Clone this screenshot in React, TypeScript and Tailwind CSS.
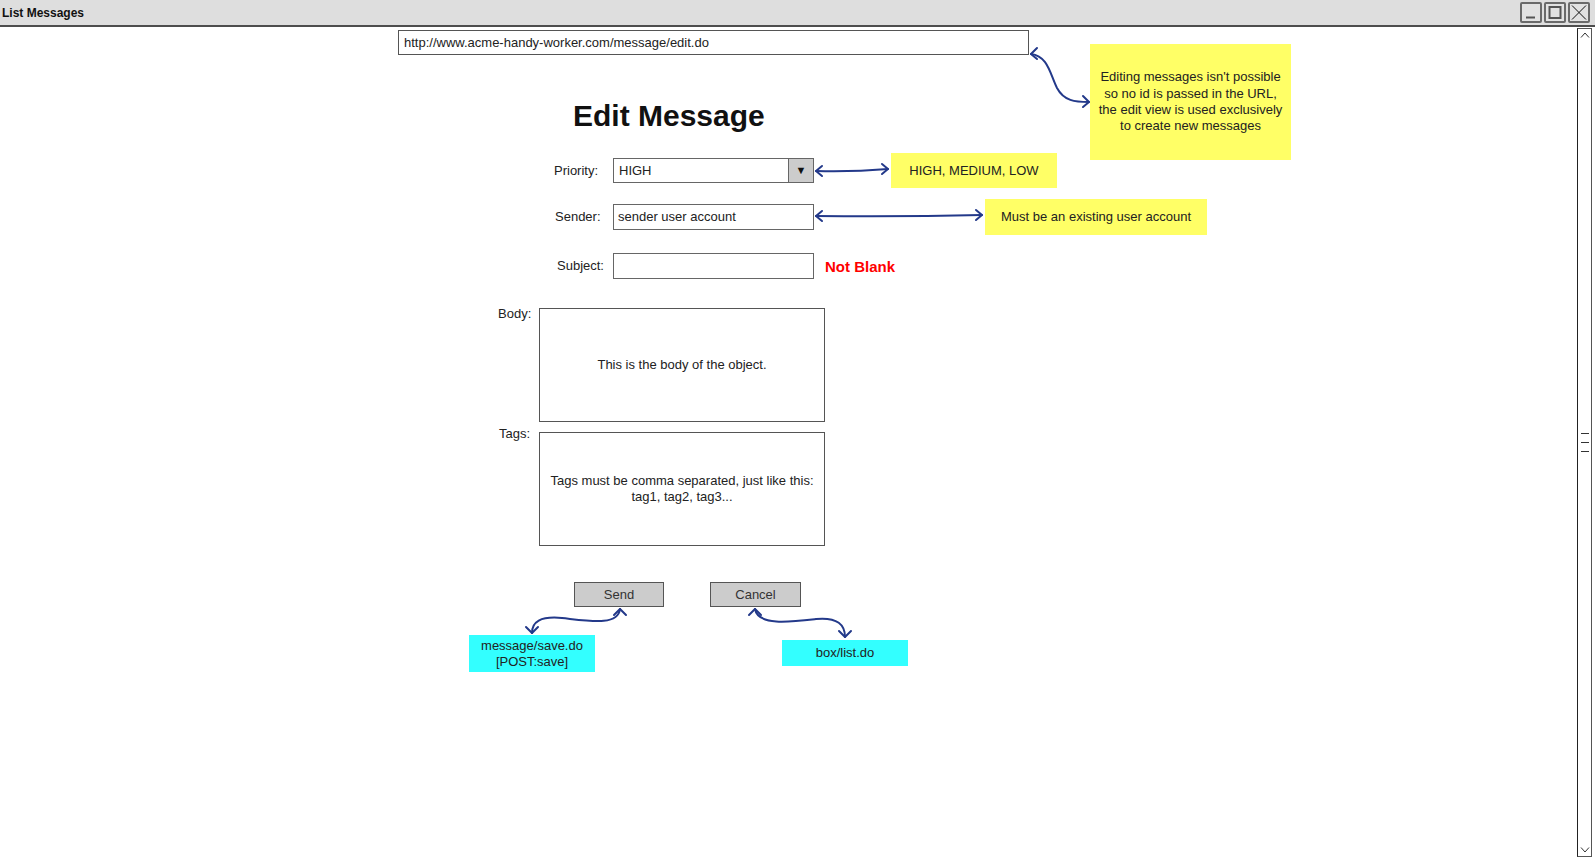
import React from "react";

// Balsamiq-style wireframe: "Edit Message" form with annotations

const Chevron: React.FC<{ dir: "up" | "down" }> = ({ dir }) => (
  <svg width="10" height="6" viewBox="0 0 10 6">
    <path
      d={dir === "up" ? "M1 5.5 L5 1 L9 5.5" : "M1 0.5 L5 5 L9 0.5"}
      fill="none"
      stroke="#333"
      strokeWidth="1"
    />
  </svg>
);

const WinButton: React.FC<{ kind: "min" | "max" | "close" }> = ({ kind }) => (
  <div className="w-[22px] h-[21px] border-2 border-[#6a6a6a] rounded-[2px] bg-[#e2e2e2] flex items-center justify-center">
    <svg width="16" height="15" viewBox="0 0 16 15">
      {kind === "min" && <path d="M3 12.5 L12 12.5" stroke="#555" strokeWidth="2" />}
      {kind === "max" && <rect x="2.5" y="2" width="11" height="11" fill="none" stroke="#555" strokeWidth="2" />}
      {kind === "close" && (
        <path d="M1 0.5 L15 14.5 M15 0.5 L1 14.5" stroke="#111" strokeWidth="1" />
      )}
    </svg>
  </div>
);

const Arrows: React.FC = () => (
  <svg
    className="absolute left-0 top-0 pointer-events-none"
    width="1595"
    height="859"
    viewBox="0 0 1595 859"
    fill="none"
    stroke="#23398a"
    strokeWidth="2"
    strokeLinecap="round"
    strokeLinejoin="round"
  >
    {/* url -> note */}
    <path d="M1031 54 C1048 56, 1050 74, 1057 88 C1064 101, 1075 102, 1089 102" />
    <path d="M1037 48 L1031 54 L1037 59" />
    <path d="M1083 96 L1089 102 L1083 107" />

    {/* priority */}
    <path d="M816 171 Q852 172 888 169" />
    <path d="M822 166 L816 171 L822 176" />
    <path d="M882 164 L888 169 L882 174" />

    {/* sender */}
    <path d="M816 216 Q900 217 982 215" />
    <path d="M822 211 L816 216 L822 221" />
    <path d="M976 210 L982 215 L976 220" />

    {/* send */}
    <path d="M620 609 C618 626, 590 621, 562 618 C540 616, 532 622, 532 633" />
    <path d="M614 615 L620 609 L626 615" />
    <path d="M526 627 L532 633 L538 627" />

    {/* cancel */}
    <path d="M755 609 C758 626, 790 622, 816 619 C838 617, 845 625, 845 637" />
    <path d="M749 615 L755 609 L761 615" />
    <path d="M839 631 L845 637 L851 631" />
  </svg>
);

const App: React.FC = () => {
  return (
    <div
      className="relative w-[1595px] h-[859px] bg-white flex flex-col overflow-hidden text-[13px] text-[#222]"
      style={{ fontFamily: '"Liberation Sans", Arial, sans-serif' }}
    >
      {/* Window title bar */}
      <div className="h-[27px] shrink-0 bg-[#dedede] border-b-2 border-[#4d4d4d] flex items-center justify-between">
        <span className="pl-[2px] text-[12px] font-bold text-[#111]">List Messages</span>
        <div className="flex gap-[2px] pr-[5px]">
          <WinButton kind="min" />
          <WinButton kind="max" />
          <WinButton kind="close" />
        </div>
      </div>

      <div className="flex-1 flex">
        {/* Page content */}
        <div className="flex-1 flex flex-col">
          {/* URL bar */}
          <div className="mt-[3px] ml-[398px] w-[631px] h-[25px] border-[1.5px] border-[#555] flex items-center pl-[5px]">
            http://www.acme-handy-worker.com/message/edit.do
          </div>

          {/* Title */}
          <h1 className="mt-[44px] ml-[573px] text-[30px] leading-[34px] font-bold text-[#111]">Edit Message</h1>

          {/* Priority */}
          <div className="mt-[20px] ml-[554px] flex items-center">
            <span className="w-[59px]">Priority:</span>
            <div className="w-[201px] h-[25px] border-[1.5px] border-[#666] flex">
              <span className="flex-1 flex items-center pl-[5px]">HIGH</span>
              <span className="w-[25px] bg-[#cccccc] border-l-[1.5px] border-[#666] flex items-center justify-center text-[11px] text-[#111]">
                ▼
              </span>
            </div>
            <div className="w-[77px]" />
            <div className="w-[166px] h-[35px] bg-[#ffff66] flex items-center justify-center">HIGH, MEDIUM, LOW</div>
          </div>

          {/* Sender */}
          <div className="mt-[11px] ml-[554px] flex items-center">
            <span className="w-[59px] pl-[1px]">Sender:</span>
            <div className="w-[201px] h-[26px] border-[1.5px] border-[#666] flex items-center pl-[4px]">
              sender user account
            </div>
            <div className="w-[171px]" />
            <div className="w-[222px] h-[36px] bg-[#ffff66] flex items-center justify-center">
              Must be an existing user account
            </div>
          </div>

          {/* Subject */}
          <div className="mt-[18px] ml-[554px] flex items-center">
            <span className="w-[59px] pl-[3px]">Subject:</span>
            <div className="w-[201px] h-[26px] border-[1.5px] border-[#666]" />
            <span className="ml-[11px] mt-[3px] text-[15px] font-bold text-[#ff0000]">Not Blank</span>
          </div>

          {/* Body */}
          <div className="mt-[29px] ml-[498px] flex items-start">
            <span className="w-[41px] leading-[16px] -mt-[2px]">Body:</span>
            <div className="w-[286px] h-[114px] border-[1.5px] border-[#555] flex items-center justify-center text-center">
              This is the body of the object.
            </div>
          </div>

          {/* Tags */}
          <div className="mt-[10px] ml-[498px] flex items-start">
            <span className="w-[41px] leading-[16px] -mt-[6px] pl-[1px]">Tags:</span>
            <div className="w-[286px] h-[114px] border-[1.5px] border-[#555] flex items-center justify-center text-center leading-[16px]">
              Tags must be comma separated, just like this:
              <br />
              tag1, tag2, tag3...
            </div>
          </div>

          {/* Buttons */}
          <div className="mt-[36px] ml-[574px] flex gap-[46px]">
            <button className="w-[90px] h-[25px] bg-[#cccccc] border-[1.5px] border-[#555] text-[#333]">Send</button>
            <button className="w-[91px] h-[25px] bg-[#cccccc] border-[1.5px] border-[#555] text-[#333]">Cancel</button>
          </div>

          {/* Link notes */}
          <div className="mt-[28px] ml-[469px] flex items-start">
            <div className="w-[126px] h-[37px] bg-[#33ffff] flex items-center justify-center text-center leading-[16px]">
              message/save.do
              <br />
              [POST:save]
            </div>
            <div className="ml-[187px] mt-[5px] w-[126px] h-[26px] bg-[#33ffff] flex items-center justify-center">
              box/list.do
            </div>
          </div>
        </div>

        {/* Scrollbar */}
        <div className="w-[15px] mt-[1px] mb-[2px] mr-[3px] border-[1.5px] border-[#555] border-l-[#222] flex flex-col items-center justify-between py-[3px]">
          <Chevron dir="up" />
          <div className="flex flex-col gap-[8px]">
            <div className="w-[8px] h-px bg-[#333]" />
            <div className="w-[8px] h-px bg-[#333]" />
            <div className="w-[8px] h-px bg-[#333]" />
          </div>
          <Chevron dir="down" />
        </div>
      </div>

      {/* Top-right sticky note */}
      <div className="absolute left-[1090px] top-[44px] w-[201px] h-[116px] bg-[#ffff66] flex items-center justify-center text-center leading-[16.3px]">
        Editing messages isn't possible
        <br />
        so no id is passed in the URL,
        <br />
        the edit view is used exclusively
        <br />
        to create new messages
      </div>

      <Arrows />
    </div>
  );
};

export default App;
